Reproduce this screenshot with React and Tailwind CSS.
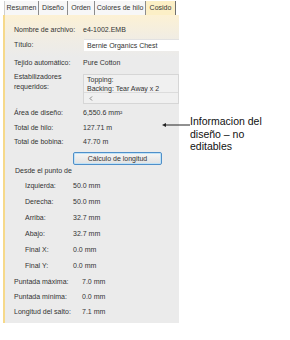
export default function App() {
  const font = { fontFamily: '"Liberation Sans", Arial, sans-serif' };
  const Row = ({ label, value, h = 'h-[14px]', lw = 'w-[69px]', pl = 'pl-[9px]', cls = '' }) => (
    <div className={`flex items-center ${h} ${pl} ${cls}`}>
      <div className={`${lw} shrink-0 whitespace-nowrap`}>{label}</div>
      <div className="whitespace-nowrap">{value}</div>
    </div>
  );
  return (
    <div className="relative w-[290px] h-[340px] bg-white overflow-hidden text-[#333]" style={font}>
      <div className="ml-[3px] w-[176px] flex flex-col text-[7px] leading-[10px]">
        {/* Tabs */}
        <div className="flex h-[15px] items-stretch pl-[1px] pt-[1px]">
          <div className="w-[34px] flex items-center justify-center bg-[#f7f7f7] border-l border-[#cfcfcf]">Resumen</div>
          <div className="w-px bg-[#8c8c8c]" />
          <div className="w-[28px] flex items-center justify-center bg-[#f7f7f7]">Diseño</div>
          <div className="w-px bg-[#8c8c8c]" />
          <div className="w-[26px] flex items-center justify-center bg-[#f7f7f7]">Orden</div>
          <div className="w-px bg-[#8c8c8c]" />
          <div className="w-[50px] flex items-center justify-center bg-[#f7f7f7]">Colores de hilo</div>
          <div className="w-px bg-[#8c8c8c]" />
          <div className="w-[29px] flex items-center justify-center bg-[#fcefc6]">Cosido</div>
          <div className="w-px bg-[#6f6f6f]" />
        </div>
        {/* Body */}
        <div className="h-[308px] border-l-2 border-[#f6d98a] bg-[linear-gradient(to_bottom,#fcf1d4_0px,#f1ede3_22px,#ebebeb_42px)] flex flex-col">
          <Row label="Nombre de archivo:" value="e4-1002.EMB" cls="mt-[8px]" />
          <div className="flex items-center h-[14px] pl-[9px] mt-[1px]">
            <div className="w-[70px] shrink-0">Título:</div>
            <div className="flex-1 h-[12px] bg-white border-t border-[#e2e2e2] flex items-center pl-[3px] whitespace-nowrap">Bernie Organics Chest</div>
          </div>
          <Row label="Tejido automático:" value="Pure Cotton" cls="mt-[4px]" />
          <div className="flex pl-[9px] mt-[2px] h-[32px]">
            <div className="w-[69px] shrink-0 leading-[10px]">Estabilizadores<br />requeridos:</div>
            <div className="flex-1 mt-[2px] h-[30px] border border-[#d6d6d6] bg-[#f0f0f0] flex flex-col">
              <div className="h-[18px] pl-[3px] leading-[9px] whitespace-nowrap border-b border-[#dcdcdc]">
                Topping:<br />Backing: Tear Away x 2
              </div>
              <div className="flex-1 flex items-center pl-[5px]">
                <svg width="4" height="5" viewBox="0 0 4 5"><path d="M3 0.5 L1 2.5 L3 4.5" fill="none" stroke="#7a7a7a" strokeWidth="0.9" /></svg>
              </div>
            </div>
          </div>
          <Row label="Área de diseño:" value={<span>6,550.6 mm²</span>} cls="mt-[2px]" />
          <Row label="Total de hilo:" value="127.71 m" cls="mt-[1px]" />
          <Row label="Total de bobina:" value="47.70 m" />
          <div className="pl-[68px] mt-[3px]">
            <div className="w-[89px] h-[13px] rounded-[2px] border border-[#4f8fc9] shadow-[inset_0_0_0_1px_#bfe2f7] bg-[linear-gradient(to_bottom,#f6f6f6,#e1e1e1)] flex items-center justify-center">Cálculo de longitud</div>
          </div>
          <div className="h-[12px] flex items-center pl-[10px]">Desde el punto de</div>
          <div className="mt-[1px]">
            <Row label="Izquierda:" value="50.0 mm" h="h-[16px]" lw="w-[48px]" pl="pl-[20px]" />
            <Row label="Derecha:" value="50.0 mm" h="h-[16px]" lw="w-[48px]" pl="pl-[20px]" />
            <Row label="Arriba:" value="32.7 mm" h="h-[16px]" lw="w-[48px]" pl="pl-[20px]" />
            <Row label="Abajo:" value="32.7 mm" h="h-[16px]" lw="w-[48px]" pl="pl-[20px]" />
            <Row label="Final X:" value="0.0 mm" h="h-[16px]" lw="w-[48px]" pl="pl-[20px]" />
            <Row label="Final Y:" value="0.0 mm" h="h-[16px]" lw="w-[48px]" pl="pl-[20px]" />
          </div>
          <Row label="Puntada máxima:" value="7.0 mm" h="h-[15px]" lw="w-[68px]" />
          <Row label="Puntada mínima:" value="0.0 mm" h="h-[15px]" lw="w-[68px]" />
          <Row label="Longitud del salto:" value="7.1 mm" h="h-[15px]" lw="w-[68px]" />
        </div>
      </div>
      {/* Annotation callout */}
      <svg className="absolute left-[160px] top-[121px]" width="32" height="8" viewBox="0 0 32 8">
        <line x1="4" y1="4" x2="30" y2="4" stroke="#222" strokeWidth="1" />
        <path d="M2 4 L6 2 L6 6 Z" fill="#222" />
      </svg>
      <div className="absolute left-[190px] top-[115px] text-[10.5px] leading-[12.5px] text-[#111]" style={font}>
        Informacion del<br />diseño – no<br />editables
      </div>
    </div>
  );
}
